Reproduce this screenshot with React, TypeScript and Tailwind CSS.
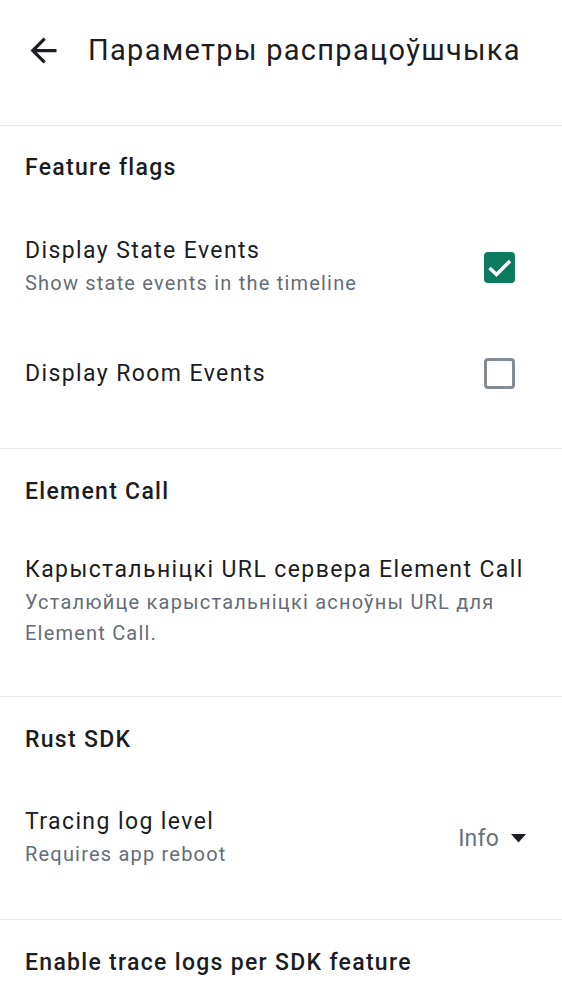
import { ReactNode } from 'react'

function SectionHeader({ title, className }: { title: string; className: string }) {
  return (
    <div
      className={`px-[25px] text-[23px] leading-[30px] font-medium tracking-[1.3px] text-[#1b1d22] ${className}`}
    >
      {title}
    </div>
  )
}

function Divider({ className }: { className: string }) {
  return <div className={`h-px bg-[#e7e8ea] ${className}`} />
}

function Item({
  title,
  subtitle,
  trailing,
  className,
}: {
  title: string
  subtitle?: string
  trailing?: ReactNode
  className: string
}) {
  return (
    <div className={`flex items-center pl-[25px] pr-[36px] ${className}`}>
      <div className="flex-1 min-w-0">
        <div className="text-[23px] leading-[30px] tracking-[1.4px] text-[#1b1d22]">{title}</div>
        {subtitle && (
          <div className="mt-[2px] text-[20px] leading-[31px] tracking-[1.2px] text-[#656d77] pr-[20px]">
            {subtitle}
          </div>
        )}
      </div>
      {trailing}
    </div>
  )
}

function Checkbox({ checked }: { checked: boolean }) {
  if (checked) {
    return (
      <div className="w-[31px] h-[31px] rounded-[4px] bg-[#0b7a5e] shrink-0 mr-[11px]">
        <svg width="31" height="31" viewBox="0 0 31 31">
          <path d="M5.5 16l7 6.5L26 9" fill="none" stroke="white" strokeWidth="3.5" />
        </svg>
      </div>
    )
  }
  return <div className="w-[31px] h-[31px] rounded-[4px] border-[3px] border-[#848b95] shrink-0 mr-[11px]" />
}

export default function App() {
  return (
    <div className="w-[562px] h-[1000px] overflow-hidden bg-white font-['Roboto',sans-serif]">
      <div className="h-[100px] flex items-center pl-[24px]">
        <svg width="39" height="39" viewBox="0 0 24 24" className="shrink-0">
          <path
            d="M20 11H7.83l5.59-5.59L12 4l-8 8 8 8 1.41-1.41L7.83 13H20v-2z"
            fill="#1b1d22"
          />
        </svg>
        <div className="ml-[25px] text-[29px] leading-[36px] tracking-[1.3px] text-[#1b1d22]">
          Параметры распрацоўшчыка
        </div>
      </div>

      <Divider className="mt-[25px]" />
      <SectionHeader title="Feature flags" className="mt-[27px]" />
      <Item
        className="mt-[53px]"
        title="Display State Events"
        subtitle="Show state events in the timeline"
        trailing={<Checkbox checked />}
      />
      <Item
        className="mt-[59px]"
        title="Display Room Events"
        trailing={<Checkbox checked={false} />}
      />

      <Divider className="mt-[59px]" />
      <SectionHeader title="Element Call" className="mt-[28px]" />
      <Item
        className="mt-[48px]"
        title="Карыстальніцкі URL сервера Element Call"
        subtitle="Усталюйце карыстальніцкі асноўны URL для Element Call."
      />

      <Divider className="mt-[47px]" />
      <SectionHeader title="Rust SDK" className="mt-[28px]" />
      <Item
        className="mt-[52px]"
        title="Tracing log level"
        subtitle="Requires app reboot"
        trailing={
          <div className="flex items-center gap-[12px]">
            <span className="text-[23px] leading-[30px] tracking-[0.2px] text-[#6b727c]">Info</span>
            <svg width="15" height="9" viewBox="0 0 15 9">
              <path d="M0 0h15L7.5 8.5z" fill="#1b1d22" />
            </svg>
          </div>
        }
      />

      <Divider className="mt-[49px]" />
      <SectionHeader title="Enable trace logs per SDK feature" className="mt-[28px]" />
    </div>
  )
}
